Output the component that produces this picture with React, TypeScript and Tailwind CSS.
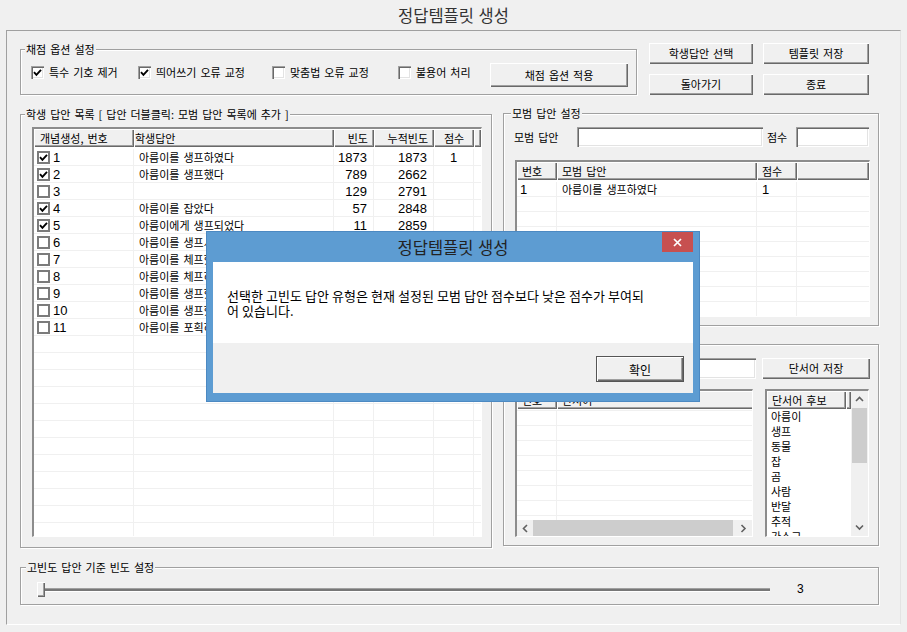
import React from "react";

const NUM = "font-['Liberation_Sans',sans-serif] text-[13px] tracking-normal [word-spacing:normal]";
const RAISED = "bg-[#f0f0f0] shadow-[inset_1px_1px_#fff,inset_-1px_-1px_#696969,inset_-2px_-2px_#a0a0a0]";
const SUNKEN = "bg-white shadow-[inset_1px_1px_#a0a0a0,inset_2px_2px_#696969,inset_-1px_-1px_#fff,inset_-2px_-2px_#e3e3e3]";
const LISTBOX =
  "bg-white border-t-2 border-l-2 border-r border-b border-t-[#8c8c8c] border-l-[#8c8c8c] border-r-white border-b-white overflow-hidden flex flex-col";
const HEAD = "bg-[#f0f0f0] shadow-[inset_1px_1px_#fff,inset_-1px_-1px_#696969,inset_-2px_-2px_#a0a0a0] h-full flex items-center shrink-0 whitespace-nowrap";
const CELL = "h-full flex items-center shrink-0 border-r border-[#f0f0f0] whitespace-nowrap overflow-hidden";

const students = [
  { n: 1, on: true, t: "아름이를 생프하였다", f: "1873", c: "1873", s: "1" },
  { n: 2, on: true, t: "아름이를 생프했다", f: "789", c: "2662", s: "" },
  { n: 3, on: false, t: "", f: "129", c: "2791", s: "" },
  { n: 4, on: true, t: "아름이를 잡았다", f: "57", c: "2848", s: "" },
  { n: 5, on: true, t: "아름이에게 생프되었다", f: "11", c: "2859", s: "" },
  { n: 6, on: false, t: "아름이를 생프시켰다", f: "9", c: "2868", s: "" },
  { n: 7, on: false, t: "아름이를 체프했다", f: "7", c: "2875", s: "" },
  { n: 8, on: false, t: "아름이를 체프하였다", f: "5", c: "2880", s: "" },
  { n: 9, on: false, t: "아름이를 생프했음", f: "4", c: "2884", s: "" },
  { n: 10, on: false, t: "아름이를 생프했어", f: "3", c: "2887", s: "" },
  { n: 11, on: false, t: "아름이를 포획하였다", f: "3", c: "2890", s: "" },
];

const cues = ["아름이", "생프", "동물", "잡", "곰", "사람", "반달", "추적", "가소고"];

function Tick() {
  return (
    <svg width="9" height="9" viewBox="0 0 9 9">
      <path d="M1 4.2 L3.4 6.8 L8 1.8" fill="none" stroke="#000" strokeWidth="1.9" />
    </svg>
  );
}

function Check({ on }: { on?: boolean }) {
  return (
    <div className={`w-[13px] h-[13px] shrink-0 flex items-center justify-center ${SUNKEN}`}>
      {on && <Tick />}
    </div>
  );
}

function FlatCheck({ on }: { on?: boolean }) {
  return (
    <div className="w-[13px] h-[13px] shrink-0 border-2 border-[#7b7b7b] bg-white flex items-center justify-center">
      {on && <Tick />}
    </div>
  );
}

function Btn({ label, className }: { label: string; className: string }) {
  return (
    <div className={`flex items-center justify-center shrink-0 whitespace-nowrap ${RAISED} ${className}`}>
      {label}
    </div>
  );
}

function Group({
  legend,
  lm,
  className,
  children,
}: {
  legend: string;
  lm: string;
  className: string;
  children?: React.ReactNode;
}) {
  return (
    <div className={`border border-[#a0a0a0] shadow-[inset_1px_1px_#fff,1px_1px_#fff] shrink-0 ${className}`}>
      <div className={`-mt-[7px] w-fit bg-[#f0f0f0] px-[1px] h-[13px] leading-[13px] whitespace-nowrap ${lm}`}>
        {legend}
      </div>
      {children}
    </div>
  );
}

function CheckItem({ on, label, w }: { on?: boolean; label: string; w: string }) {
  return (
    <div className={`flex items-center h-[13px] mt-[3px] shrink-0 ${w}`}>
      <Check on={on} />
      <span className="ml-[5px] whitespace-nowrap">{label}</span>
    </div>
  );
}

function Chevron({ dir }: { dir: "up" | "down" | "left" | "right" }) {
  const d = {
    up: "M1 5 L4.5 1.5 L8 5",
    down: "M1 1.5 L4.5 5 L8 1.5",
    left: "M5 1 L1.5 4.5 L5 8",
    right: "M1.5 1 L5 4.5 L1.5 8",
  }[dir];
  const vertical = dir === "up" || dir === "down";
  return (
    <svg width={vertical ? 9 : 7} height={vertical ? 7 : 9} viewBox={vertical ? "0 0 9 7" : "0 0 7 9"}>
      <path d={d} fill="none" stroke="#606060" strokeWidth="1.6" />
    </svg>
  );
}

function StudentList() {
  const rows = Array.from({ length: 24 }, (_, i) => students[i]);
  return (
    <div className={`ml-[11px] mt-[6px] w-[450px] h-[410px] ${LISTBOX}`}>
      <div className="flex h-[18px] shrink-0">
        <div className={`${HEAD} w-[100px] pl-[6px]`}>개념생성, 번호</div>
        <div className={`${HEAD} w-[200px] pl-[1px]`}>학생답안</div>
        <div className={`${HEAD} w-[40px] justify-end pr-[6px]`}>빈도</div>
        <div className={`${HEAD} w-[60px] justify-end pr-[6px]`}>누적빈도</div>
        <div className={`${HEAD} w-[40px] justify-center`}>점수</div>
        <div className={`${HEAD} flex-1`} />
      </div>
      <div className="flex-1 overflow-hidden mt-[2px]">
        {rows.map((r, i) => (
          <div key={i} className="flex h-[17px] border-b border-[#f0f0f0]">
            <div className={`${CELL} w-[100px] pl-[3px]`}>
              {r && (
                <>
                  <FlatCheck on={r.on} />
                  <span className={`ml-[3px] ${NUM}`}>{r.n}</span>
                </>
              )}
            </div>
            <div className={`${CELL} w-[200px] pl-[5px]`}>{r?.t}</div>
            <div className={`${CELL} w-[40px] justify-end pr-[6px] ${NUM}`}>{r?.f}</div>
            <div className={`${CELL} w-[60px] justify-end pr-[6px] ${NUM}`}>{r?.c}</div>
            <div className={`${CELL} w-[40px] justify-center ${NUM}`}>{r?.s}</div>
            <div className="flex-1" />
          </div>
        ))}
      </div>
    </div>
  );
}

function ModelList() {
  return (
    <div className={`ml-[11px] mt-[13px] w-[355px] h-[157px] ${LISTBOX}`}>
      <div className="flex h-[18px] shrink-0">
        <div className={`${HEAD} w-[40px] pl-[5px]`}>번호</div>
        <div className={`${HEAD} w-[200px] pl-[5px]`}>모범 답안</div>
        <div className={`${HEAD} w-[40px] pl-[5px]`}>점수</div>
        <div className={`${HEAD} flex-1`} />
      </div>
      <div className="flex-1 overflow-hidden mt-[2px]">
        {Array.from({ length: 10 }, (_, i) => (
          <div key={i} className="flex h-[15px] border-b border-[#f0f0f0]">
            <div className={`${CELL} w-[40px] pl-[3px] ${NUM}`}>{i === 0 ? "1" : ""}</div>
            <div className={`${CELL} w-[200px] pl-[5px]`}>{i === 0 ? "아름이를 생프하였다" : ""}</div>
            <div className={`${CELL} w-[40px] pl-[5px] ${NUM}`}>{i === 0 ? "1" : ""}</div>
            <div className="flex-1" />
          </div>
        ))}
      </div>
    </div>
  );
}

function CueTable() {
  return (
    <div className={`w-[238px] h-[148px] ${LISTBOX}`}>
      <div className="flex h-[18px] shrink-0">
        <div className={`${HEAD} w-[40px] pl-[5px]`}>번호</div>
        <div className={`${HEAD} w-[200px] pl-[5px]`}>단서어</div>
      </div>
      <div className="flex-1 overflow-hidden mt-[1px]">
        {Array.from({ length: 8 }, (_, i) => (
          <div key={i} className="flex h-[15px] border-t border-[#f0f0f0] w-max">
            <div className={`${CELL} w-[40px]`} />
            <div className={`${CELL} w-[200px]`} />
          </div>
        ))}
      </div>
      <div className="flex h-[16px] shrink-0 bg-[#f0f0f0]">
        <div className="w-[16px] flex items-center justify-center">
          <Chevron dir="left" />
        </div>
        <div className="flex-1">
          <div className="w-[200px] h-full bg-[#cdcdcd]" />
        </div>
        <div className="w-[17px] flex items-center justify-center">
          <Chevron dir="right" />
        </div>
      </div>
    </div>
  );
}

function CueCandidates() {
  return (
    <div className={`ml-[12px] w-[104px] h-[148px] ${LISTBOX} !flex-row`}>
      <div className="w-[84px] flex flex-col overflow-hidden">
        <div className="flex h-[18px] shrink-0">
          <div className={`${HEAD} w-[79px] pl-[5px]`}>단서어 후보</div>
          <div className={`${HEAD} w-[5px]`} />
        </div>
        {cues.map((c) => (
          <div key={c} className="h-[15px] shrink-0 flex items-center pl-[4px] whitespace-nowrap">
            {c}
          </div>
        ))}
      </div>
      <div className="w-[17px] flex flex-col bg-[#f0f0f0]">
        <div className="h-[17px] flex items-center justify-center">
          <Chevron dir="up" />
        </div>
        <div className="flex-1">
          <div className="h-[55px] mx-[1px] bg-[#cdcdcd]" />
        </div>
        <div className="h-[17px] flex items-center justify-center">
          <Chevron dir="down" />
        </div>
      </div>
    </div>
  );
}

export default function App() {
  return (
    <div className="w-[907px] h-[632px] bg-[#f0f0f0] relative overflow-hidden font-['Noto_Sans_CJK_KR',sans-serif] text-[11px] leading-[13px] tracking-normal [word-spacing:1.5px] text-black">
      <div className="h-[30px] flex items-center justify-center text-[16.5px] [word-spacing:1px] text-[#333]">
        정답템플릿 생성
      </div>

      <div className="ml-[6px] w-[895px] h-[595px] border border-[#a0a0a0] border-r-[#e3e3e3] border-b-white pl-[13px] pt-[12px]">
        {/* 채점 옵션 + 버튼 */}
        <div className="flex items-start">
          <Group legend="채점 옵션 설정" lm="ml-[4px]" className="mt-[6px] w-[617px] h-[46px]">
            <div className="flex items-start mt-[7px] pl-[10px]">
              <CheckItem on label="특수 기호 제거" w="w-[107px]" />
              <CheckItem on label="띄어쓰기 오류 교정" w="w-[134px]" />
              <CheckItem label="맞춤법 오류 교정" w="w-[126px]" />
              <CheckItem label="불용어 처리" w="w-[92px]" />
              <Btn label="채점 옵션 적용" className="w-[138px] h-[24px]" />
            </div>
          </Group>
          <div className="ml-[12px] flex flex-col gap-[10px]">
            <Btn label="학생답안 선택" className="w-[104px] h-[21px]" />
            <Btn label="돌아가기" className="w-[104px] h-[21px]" />
          </div>
          <div className="ml-[10px] flex flex-col gap-[10px]">
            <Btn label="템플릿 저장" className="w-[106px] h-[21px]" />
            <Btn label="종료" className="w-[106px] h-[21px]" />
          </div>
        </div>

        {/* 학생 답안 / 모범 답안 */}
        <div className="flex items-start mt-[18px]">
          <Group
            legend="학생 답안 목록 [ 답안 더블클릭: 모범 답안 목록에 추가 ]"
            lm="ml-[4px]"
            className="mt-[1px] w-[472px] h-[434px]"
          >
            <StudentList />
          </Group>

          <div className="ml-[11px] flex flex-col">
            <Group legend="모범 답안 설정" lm="ml-[7px]" className="w-[376px] h-[213px]">
              <div className="flex items-center mt-[7px] pl-[10px] h-[20px]">
                <span className="w-[63px] shrink-0">모범 답안</span>
                <div className={`${SUNKEN} w-[186px] h-[20px] shrink-0`} />
                <span className="ml-[4px] w-[29px] shrink-0">점수</span>
                <div className={`${SUNKEN} w-[73px] h-[20px] shrink-0`} />
              </div>
              <ModelList />
            </Group>

            <Group legend="단서어 설정" lm="ml-[7px]" className="mt-[18px] w-[376px] h-[202px]">
              <div className="flex items-center mt-[7px] pl-[10px] h-[21px]">
                <span className="w-[63px] shrink-0">단서어</span>
                <div className={`${SUNKEN} w-[179px] h-[21px] shrink-0`} />
                <Btn label="단서어 저장" className="ml-[6px] w-[108px] h-[21px]" />
              </div>
              <div className="flex mt-[10px] ml-[11px]">
                <CueTable />
                <CueCandidates />
              </div>
            </Group>
          </div>
        </div>

        {/* 빈도 설정 */}
        <Group legend="고빈도 답안 기준 빈도 설정" lm="ml-[5px]" className="mt-[19px] w-[859px] h-[38px]">
          <div className="flex items-center mt-[8px] pl-[16px] h-[15px]">
            <div className="relative w-[733px] h-[15px] flex items-center">
              <div className="w-full h-[4px] border-t border-b border-t-[#a0a0a0] border-b-white bg-[#777]" />
              <div className={`absolute left-0 top-0 w-[8px] h-[15px] ${RAISED}`} />
            </div>
            <span className="ml-[27px] font-['Liberation_Sans',sans-serif] text-[12px]">3</span>
          </div>
        </Group>
      </div>

      {/* 메시지 박스 */}
      <div className="absolute left-[206px] top-[231px] w-[494px] h-[171px] bg-[#5d9cd2] border border-[#4c89c2] px-[6px] pb-[8px] flex flex-col">
        <div className="relative h-[30px] shrink-0 flex items-center justify-center text-[16.5px] [word-spacing:1px] text-[#222]">
          정답템플릿 생성
          <div className="absolute right-0 top-0 w-[31px] h-[20px] bg-[#c75050] flex items-center justify-center">
            <svg width="9" height="9" viewBox="0 0 9 9">
              <path d="M1 1 L8 8 M8 1 L1 8" stroke="#fff" strokeWidth="1.7" />
            </svg>
          </div>
        </div>
        <div className="flex-1 flex flex-col">
          <div className="h-[81px] shrink-0 bg-white flex items-center pl-[14px] text-[13px] leading-[15px] [word-spacing:0.2px]">
            <p>
              선택한 고빈도 답안 유형은 현재 설정된 모범 답안 점수보다 낮은 점수가 부여되
              <br />어 있습니다.
            </p>
          </div>
          <div className="flex-1 bg-[#f0f0f0] flex justify-end items-start pt-[13px] pr-[9px]">
            <div className="w-[88px] h-[26px] border border-[#555] shadow-[inset_1px_1px_#fff,inset_-1px_-1px_#696969,inset_-2px_-2px_#a0a0a0] bg-[#f0f0f0] flex items-center justify-center text-[12px]">
              확인
            </div>
          </div>
        </div>
      </div>
    </div>
  );
}
